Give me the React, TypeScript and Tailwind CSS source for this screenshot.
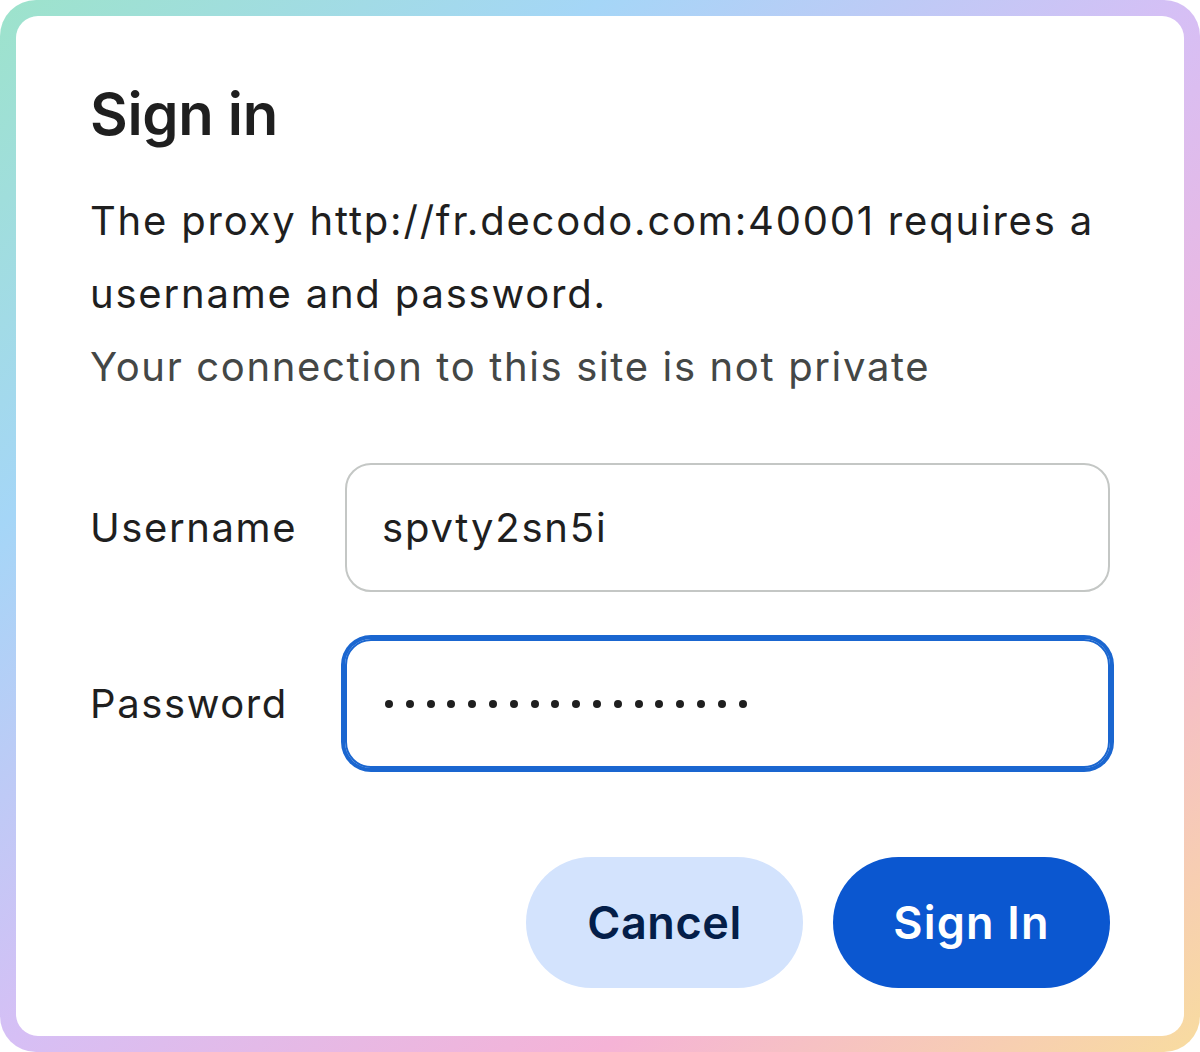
export default function App() {
  return (
    <div className="w-[1200px] h-[1052px] p-4 rounded-[36px] bg-[linear-gradient(to_bottom_right,#9de3cb_0%,#a5d6f7_25%,#d6bff5_50%,#f5b3d6_75%,#f8dc9f_100%)] font-['Inter',sans-serif]">
      <div className="w-full h-full bg-white rounded-[22px] px-[74px] pt-[68px] flex flex-col">
        <h1 className="text-[58px] leading-[60px] font-semibold text-[#1f1f1f] tracking-[-0.3px]">Sign in</h1>
        <p className="mt-[40px] text-[40px] leading-[73px] text-[#1f1f1f] tracking-[1.8px]">
          The proxy http://fr.decodo.com:40001 requires a username and password.
        </p>
        <p className="text-[40px] leading-[73px] text-[#444746] tracking-[1.65px]">Your connection to this site is not private</p>
        <div className="mt-[60px] grid grid-cols-[255px_1fr] gap-y-[47px] items-center">
          <label className="text-[40px] text-[#1f1f1f] tracking-[1.6px]">Username</label>
          <div className="h-[129px] rounded-[26px] border-2 border-[#c4c7c5] flex items-center pl-[35px] text-[40px] text-[#1f1f1f] tracking-[1.8px]">
            spvty2sn5i
          </div>
          <label className="text-[40px] text-[#1f1f1f] tracking-[1.6px]">Password</label>
          <div className="h-[129px] rounded-[26px] border-2 border-[#1a66d0] ring-4 ring-[#1a66d0] flex items-center pl-[38px] gap-[12.8px]">
            {Array.from({ length: 18 }).map((_, i) => (
              <span key={i} className="w-[8px] h-[8px] rounded-full bg-[#1f1f1f]" />
            ))}
          </div>
        </div>
        <div className="mt-[89px] flex justify-end gap-[30px]">
          <button className="w-[277px] h-[131px] rounded-full bg-[#d3e3fd] text-[#041e49] text-[45px] font-semibold tracking-[0.6px]">
            Cancel
          </button>
          <button className="w-[277px] h-[131px] rounded-full bg-[#0b57d0] text-white text-[45px] font-semibold tracking-[1.2px]">
            Sign In
          </button>
        </div>
      </div>
    </div>
  );
}
